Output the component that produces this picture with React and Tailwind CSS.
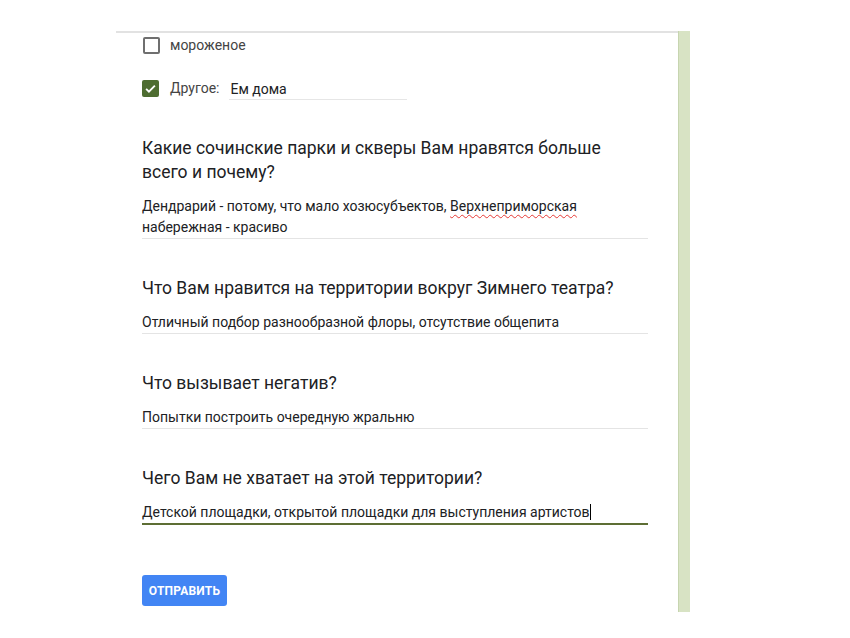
import React from 'react';

const questions = [
  {
    title: 'Какие сочинские парки и скверы Вам нравятся больше всего и почему?',
    answer: (
      <>
        Дендрарий - потому, что мало хозюсубъектов,{' '}
        <span className="underline decoration-wavy decoration-[#e53935] decoration-1 underline-offset-[3px]">
          Верхнеприморская
        </span>{' '}
        набережная - красиво
      </>
    ),
  },
  {
    title: 'Что Вам нравится на территории вокруг Зимнего театра?',
    answer: 'Отличный подбор разнообразной флоры, отсутствие общепита',
  },
  {
    title: 'Что вызывает негатив?',
    answer: 'Попытки построить очередную жральню',
  },
  {
    title: 'Чего Вам не хватает на этой территории?',
    answer: 'Детской площадки, открытой площадки для выступления артистов',
    focused: true,
  },
];

const Checkbox = ({ checked }) =>
  checked ? (
    <span className="w-[17px] h-[17px] rounded-[2px] bg-[#4e6d31] flex items-center justify-center">
      <svg viewBox="0 0 24 24" className="w-[15px] h-[15px]" fill="none" stroke="white" strokeWidth="3">
        <path d="M5 12.5l4.5 4.5L19 7.5" />
      </svg>
    </span>
  ) : (
    <span className="w-[17px] h-[17px] rounded-[2px] border-2 border-[#6f6f6f] bg-white" />
  );

export default function App() {
  return (
    <div className="min-h-screen bg-white text-[#202124]" style={{ fontFamily: 'Roboto, "Noto Sans", sans-serif' }}>
      <div className="flex ml-[116px] pt-[31px]">
        <div className="w-[562px] border-t-2 border-[#e2e2e2] pl-[26px] pr-[30px]">
          {/* Checkbox options */}
          <div className="mt-[3px] h-[18px] flex items-center gap-[10px] ml-[1px]">
            <Checkbox />
            <span className="text-[14px] text-[#444]">мороженое</span>
          </div>
          <div className="mt-[25px] h-[18px] flex items-center">
            <Checkbox checked />
            <span className="ml-[11px] text-[14px] text-[#444]">Другое:</span>
            <div className="ml-[10px] w-[178px] border-b border-[#e6e6e6] text-[14px] leading-[20px] pl-[1px] mt-[2px]">
              Ем дома
            </div>
          </div>

          {/* Questions */}
          {questions.map((q, i) => (
            <div key={i} className={i === 0 ? 'mt-[39px]' : 'mt-[37px]'}>
              <div className="text-[17.5px] leading-[24px]">{q.title}</div>
              <div
                className={`mt-[12px] text-[14px] leading-[21px] ${
                  q.focused ? 'border-b-2 border-[#5d6e34]' : 'border-b border-[#e4e4e4]'
                }`}
              >
                {q.answer}
                {q.focused && <span className="inline-block w-px h-[16px] bg-black align-[-3px]" />}
              </div>
            </div>
          ))}

          {/* Submit */}
          <button className="mt-[50px] w-[85px] h-[31px] rounded-[3px] bg-[#4285f4] text-white text-[12px] font-bold tracking-[0.2px]">
            ОТПРАВИТЬ
          </button>
        </div>
        <div className="w-[12px] h-[581px] bg-[#d8e3c4] border-l border-[#c7d5b0]" />
      </div>
    </div>
  );
}
